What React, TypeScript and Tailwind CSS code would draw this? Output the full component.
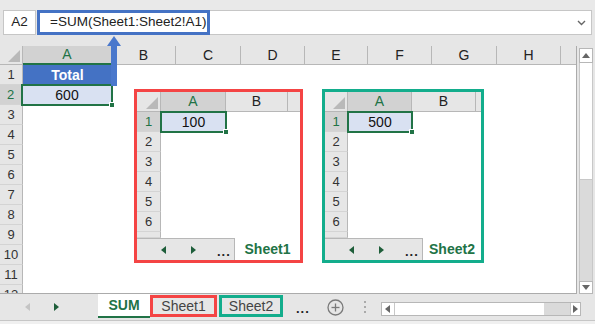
import React from 'react';

type Col = { label: string; w: string; selected?: boolean };

const mainCols: Col[] = [
    { label: 'A', w: 'w-[89px]', selected: true },
    { label: 'B', w: 'w-[64px]' },
    { label: 'C', w: 'w-[65px]' },
    { label: 'D', w: 'w-[64px]' },
    { label: 'E', w: 'w-[63px]' },
    { label: 'F', w: 'w-[64px]' },
    { label: 'G', w: 'w-[65px]' },
    { label: 'H', w: 'w-[64px]' },
    { label: '', w: 'flex-1' },
];

const Arrow: React.FC<{ dir: 'l' | 'r'; color: string }> = ({ dir, color }) => (
    <svg width="5" height="8" viewBox="0 0 5 8">
        <polygon points={dir === 'l' ? '5,0 5,8 0,4' : '0,0 0,8 5,4'} fill={color} />
    </svg>
);

const CornerTri: React.FC = () => (
    <svg width="12" height="12" viewBox="0 0 12 12">
        <polygon points="12,0 12,12 0,12" fill="#b9b9b9" />
    </svg>
);

const SelectedCell: React.FC<{ value: string }> = ({ value }) => (
    <div className="relative h-full bg-[#d9e1f2] flex items-center justify-center text-[14px] text-[#111]">
        {value}
        <div className="absolute -top-[1px] -left-[1px] -right-[1px] -bottom-[1px] border-2 border-[#217346]" />
        <div className="absolute -right-[3px] -bottom-[3px] w-[6px] h-[6px] bg-[#217346] border border-white" />
    </div>
);

interface MiniSheetProps {
    pos: string;
    frame: string;
    cornerW: string;
    colAW: string;
    colBW: string;
    name: string;
    value: string;
}

const MiniSheet: React.FC<MiniSheetProps> = ({ pos, frame, cornerW, colAW, colBW, name, value }) => (
    <div className={`absolute ${pos} h-[174px] border-[3px] ${frame} bg-white flex flex-col overflow-hidden`}>
        {/* column headers */}
        <div className="flex h-[20px] shrink-0 border-b border-[#b7b7b7] bg-[#e6e6e6]">
            <div className={`${cornerW} shrink-0 border-r border-[#b7b7b7] flex items-end justify-end pr-[2px] pb-[2px]`}>
                <CornerTri />
            </div>
            <div className={`${colAW} shrink-0 bg-[#d2d2d2] border-r border-[#b7b7b7] flex items-center justify-center text-[14px] text-[#217346]`}>A</div>
            <div className={`${colBW} shrink-0 border-r border-[#b7b7b7] flex items-center justify-center text-[14px] text-[#222]`}>B</div>
            <div className="flex-1" />
        </div>
        {[1, 2, 3, 4, 5, 6, 7].map((n) => (
            <div key={n} className={`flex shrink-0 ${n === 7 ? 'h-[6px]' : 'h-[20px]'}`}>
                <div
                    className={`${cornerW} shrink-0 border-r border-b border-r-[#b7b7b7] border-b-[#d4d4d4] flex items-center justify-center text-[13px] ${
                        n === 1 ? 'bg-[#d2d2d2] text-[#217346]' : 'bg-[#e6e6e6] text-[#333]'
                    }`}
                >
                    {n < 7 ? n : ''}
                </div>
                <div className={`${colAW} shrink-0`}>{n === 1 && <SelectedCell value={value} />}</div>
                <div className="flex-1" />
            </div>
        ))}
        {/* sheet tab bar */}
        <div className="flex h-[22px] shrink-0">
            <div className="w-[98px] shrink-0 bg-[#e6e6e6] border-t border-r border-[#b7b7b7] flex items-center">
                <div className="ml-[24px]">
                    <Arrow dir="l" color="#1e5e3a" />
                </div>
                <div className="ml-[25px]">
                    <Arrow dir="r" color="#1e5e3a" />
                </div>
                <div className="ml-[21px] text-[13px] font-bold text-[#222] tracking-[1px] leading-none pt-[3px]">...</div>
            </div>
            <div className="flex-1 flex items-center justify-center text-[14px] font-bold text-[#217346]">{name}</div>
        </div>
    </div>
);

export default function App() {
    return (
        <div className="w-[595px] h-[324px] bg-[#e6e6e6] flex flex-col overflow-hidden relative font-['Liberation_Sans',Arial,sans-serif] text-[#222]">
            <div className="h-[10px] shrink-0 bg-[#e9e9e9]" />

            {/* formula bar */}
            <div className="h-[25px] shrink-0 flex">
                <div className="ml-[3px] w-[33px] bg-white border border-[#c6c6c6] flex items-center justify-center text-[13.5px]">A2</div>
                <div className="ml-[1px] w-[555px] bg-white border border-l-0 border-[#c6c6c6] flex items-center">
                    <div className="w-[173px] h-[25px] -my-[1px] border-[3px] border-[#4472c4] flex items-center pl-[10px] text-[13.5px] text-[#222]">
                        =SUM(Sheet1:Sheet2!A1)
                    </div>
                    <div className="ml-auto mr-[5px]">
                        <svg width="9" height="6" viewBox="0 0 9 6">
                            <polyline points="1,1 4.5,4.5 8,1" fill="none" stroke="#666" strokeWidth="1.4" />
                        </svg>
                    </div>
                </div>
            </div>

            <div className="h-[11px] shrink-0" />

            {/* grid + vertical scrollbar */}
            <div className="h-[248px] shrink-0 flex">
                <div className="w-[577px] shrink-0 bg-white border-r border-b border-[#ababab] flex flex-col overflow-hidden">
                    <div className="flex h-[19px] shrink-0 bg-[#e6e6e6] border-b border-[#b7b7b7]">
                        <div className="w-[23px] shrink-0 border-r border-[#b7b7b7] flex items-end justify-end pr-[2px] pb-[2px]">
                            <CornerTri />
                        </div>
                        {mainCols.map((c, i) => (
                            <div
                                key={i}
                                className={`${c.w} shrink-0 flex items-center justify-center text-[14px] ${
                                    c.selected
                                        ? 'bg-[#d2d2d2] text-[#217346] border-b-2 border-b-[#217346] -mb-[1px]'
                                        : 'text-[#222]'
                                } ${c.label ? 'border-r border-r-[#b7b7b7]' : ''}`}
                            >
                                {c.label}
                            </div>
                        ))}
                    </div>
                    {[1, 2, 3, 4, 5, 6, 7, 8, 9, 10, 11, 12].map((n) => (
                        <div key={n} className="flex h-[20px] shrink-0">
                            <div
                                className={`w-[23px] shrink-0 border-b border-b-[#d4d4d4] flex items-center justify-center text-[13px] ${
                                    n === 2
                                        ? 'bg-[#d2d2d2] text-[#217346] border-r-2 border-r-[#217346]'
                                        : 'bg-[#e6e6e6] text-[#333] border-r border-r-[#b7b7b7]'
                                }`}
                            >
                                {n}
                            </div>
                            <div className={`w-[89px] shrink-0 ${n === 2 ? '-ml-[1px] w-[90px]' : ''}`}>
                                {n === 1 && (
                                    <div className="h-full bg-[#4472c4] text-white font-bold text-[14px] flex items-center justify-center">Total</div>
                                )}
                                {n === 2 && <SelectedCell value="600" />}
                            </div>
                            <div className="flex-1" />
                        </div>
                    ))}
                </div>
                <div className="flex-1 flex flex-col pt-[2px] pl-[2px] pr-[2px]">
                    <div className="w-[14px] h-[15px] shrink-0 bg-white border border-[#b7b7b7] flex items-center justify-center">
                        <svg width="8" height="5" viewBox="0 0 8 5">
                            <polygon points="0,5 8,5 4,0" fill="#666" />
                        </svg>
                    </div>
                    <div className="w-[14px] h-[117px] shrink-0 bg-white border border-t-0 border-[#c8c8c8]" />
                    <div className="w-[14px] flex-1 bg-[#dadada] border-x border-[#c8c8c8]" />
                    <div className="w-[14px] h-[13px] shrink-0 bg-white border border-[#b7b7b7] flex items-center justify-center">
                        <svg width="8" height="5" viewBox="0 0 8 5">
                            <polygon points="0,0 8,0 4,5" fill="#666" />
                        </svg>
                    </div>
                </div>
            </div>

            {/* sheet tabs */}
            <div className="h-[26px] shrink-0 flex items-stretch bg-[#e6e6e6]">
                <div className="w-[98px] shrink-0 flex items-center">
                    <div className="ml-[25px]">
                        <Arrow dir="l" color="#c4c4c4" />
                    </div>
                    <div className="ml-[24px]">
                        <Arrow dir="r" color="#1e5e3a" />
                    </div>
                </div>
                <div className="w-[52px] shrink-0 h-[24px] bg-white border-b-2 border-[#217346] flex items-center justify-center text-[14px] font-bold text-[#217346]">
                    SUM
                </div>
                <div className="w-[67px] shrink-0 mt-[1px] h-[22px] border-[3px] border-[#f44444] flex items-center justify-center text-[14px] text-[#444]">
                    Sheet1
                </div>
                <div className="w-[64px] ml-[2px] shrink-0 mt-[1px] h-[22px] border-[3px] border-[#13ad8c] flex items-center justify-center text-[14px] text-[#444]">
                    Sheet2
                </div>
                <div className="ml-[13px] text-[13px] font-bold text-[#222] tracking-[1px] flex items-center pt-[4px]">...</div>
                <div className="ml-[17px] flex items-center">
                    <svg width="17" height="17" viewBox="0 0 17 17">
                        <circle cx="8.5" cy="8.5" r="7.5" fill="none" stroke="#7a7a7a" strokeWidth="1.3" />
                        <line x1="4.5" y1="8.5" x2="12.5" y2="8.5" stroke="#7a7a7a" strokeWidth="1.3" />
                        <line x1="8.5" y1="4.5" x2="8.5" y2="12.5" stroke="#7a7a7a" strokeWidth="1.3" />
                    </svg>
                </div>
                <div className="ml-[20px] flex flex-col justify-center gap-[3px]">
                    <div className="w-[2px] h-[2px] bg-[#aaa]" />
                    <div className="w-[2px] h-[2px] bg-[#aaa]" />
                    <div className="w-[2px] h-[2px] bg-[#aaa]" />
                </div>
                <div className="ml-[15px] w-[200px] h-[14px] mt-[8px] flex border border-[#b7b7b7]">
                    <div className="w-[13px] bg-white border-r border-[#c8c8c8] flex items-center justify-center">
                        <Arrow dir="l" color="#666" />
                    </div>
                    <div className="w-[149px] bg-white" />
                    <div className="flex-1 bg-[#dadada]" />
                    <div className="w-[10px] bg-white border-l border-[#c8c8c8] flex items-center justify-center">
                        <Arrow dir="r" color="#666" />
                    </div>
                </div>
            </div>
            <div className="flex-1 border-t border-[#c6c6c6] bg-[#f0f0f0]" />

            {/* pasted sheet snapshots */}
            <MiniSheet
                pos="left-[134px] top-[89px] w-[169px]"
                frame="border-[#f44444]"
                cornerW="w-[24px]"
                colAW="w-[65px]"
                colBW="w-[62px]"
                name="Sheet1"
                value="100"
            />
            <MiniSheet
                pos="left-[322px] top-[89px] w-[162px]"
                frame="border-[#13ad8c]"
                cornerW="w-[23px]"
                colAW="w-[64px]"
                colBW="w-[64px]"
                name="Sheet2"
                value="500"
            />

            {/* blue arrow from A1 to formula */}
            <svg className="absolute left-[105px] top-[35px]" width="18" height="51" viewBox="0 0 18 51">
                <polygon points="9,1 16,11 2,11" fill="#4a78cc" />
                <rect x="6" y="10" width="6" height="41" fill="#4a78cc" />
            </svg>
        </div>
    );
}
